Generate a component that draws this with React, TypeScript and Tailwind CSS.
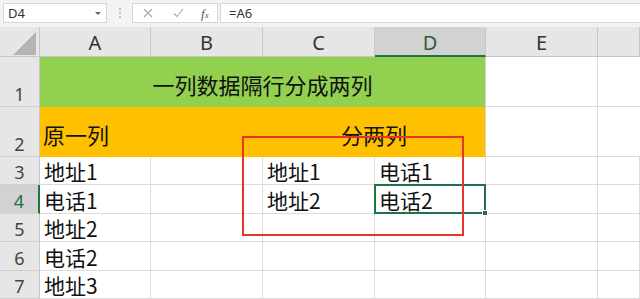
import React from "react";

const cjk = { fontFamily: '"Noto Sans CJK SC", "Noto Sans", sans-serif' };
const ui = { fontFamily: '"Noto Sans", "Open Sans", sans-serif' };

const cols = ["A", "B", "C", "D", "E", ""];

const dataRows = [
  { n: 3, cells: ["地址1", "", "地址1", "电话1", "", ""] },
  { n: 4, cells: ["电话1", "", "地址2", "电话2", "", ""] },
  { n: 5, cells: ["地址2", "", "", "", "", ""] },
  { n: 6, cells: ["电话2", "", "", "", "", ""] },
  { n: 7, cells: ["地址3", "", "", "", "", ""] },
];

function RowHead({ n, active }: { n: number; active?: boolean }) {
  return (
    <div
      className={
        "flex items-end justify-center pb-[3px] text-[18px] leading-none border-b border-[#d0d0d0] " +
        (active
          ? "bg-[#d2d2d2] text-[#217346] border-r-2 border-r-[#217346]"
          : "bg-[#e6e6e6] text-[#444] border-r border-r-[#c6c6c6]")
      }
      style={ui}
    >
      {n}
    </div>
  );
}

export default function App() {
  return (
    <div className="w-[640px] h-[299px] overflow-hidden bg-white relative">
      {/* formula bar */}
      <div className="h-[27px] bg-[#f3f3f3] flex items-start pt-[3px]" style={ui}>
        <div className="ml-[3px] w-[104px] h-[20px] bg-white border border-[#d6d6d6] flex items-center justify-between pl-[4px] pr-[5px]">
          <span className="text-[13px] text-[#333] leading-none">D4</span>
          <span className="w-0 h-0 border-l-[3px] border-r-[3px] border-t-[3px] border-l-transparent border-r-transparent border-t-[#666]" />
        </div>
        <div className="w-[25px] h-[20px] flex flex-col items-center justify-center gap-[2px]">
          <span className="w-[2px] h-[2px] bg-[#c0c0c0]" />
          <span className="w-[2px] h-[2px] bg-[#c0c0c0]" />
          <span className="w-[2px] h-[2px] bg-[#c0c0c0]" />
        </div>
        <div className="w-[86px] h-[20px] bg-white border border-[#d6d6d6] flex items-center pl-[10px]">
          <svg width="10" height="10" viewBox="0 0 10 10" className="mr-[20px]">
            <path d="M1 1L9 9M9 1L1 9" stroke="#a8a8a8" strokeWidth="1.1" fill="none" />
          </svg>
          <svg width="11" height="10" viewBox="0 0 11 10" className="mr-[17px]">
            <path d="M1 5.5L4 8.5L10 1" stroke="#a8a8a8" strokeWidth="1.1" fill="none" />
          </svg>
          <span className="italic text-[13px] text-[#555] leading-none" style={{ fontFamily: '"Liberation Serif", serif' }}>
            f<span className="text-[9px]">x</span>
          </span>
        </div>
        <div className="ml-[2px] flex-1 h-[20px] bg-white border border-[#d6d6d6] border-r-0 flex items-center pl-[8px]">
          <span className="text-[13px] text-[#333] leading-none">=A6</span>
        </div>
      </div>

      {/* sheet */}
      <div className="grid grid-cols-[40px_111px_112px_112px_111px_112px_1fr] grid-rows-[30px_50px_50px_28px_29px_28px_29px_28px]">
        {/* select-all corner */}
        <div className="bg-[#e6e6e6] border-r border-b border-[#c6c6c6] flex items-end justify-end pr-[3px] pb-[1px]">
          <svg width="23" height="23" viewBox="0 0 23 23">
            <path d="M23 0V23H0Z" fill="#b4b4b4" />
          </svg>
        </div>
        {cols.map((c, i) =>
          c === "D" ? (
            <div
              key={i}
              className="bg-[#d2d2d2] border-r border-r-[#c6c6c6] border-b-2 border-b-[#217346] flex items-end justify-center pb-[2px] text-[20px] leading-none text-[#2f5d3e]"
              style={ui}
            >
              {c}
            </div>
          ) : (
            <div
              key={i}
              className="bg-[#e6e6e6] border-r border-b border-[#c6c6c6] flex items-end justify-center pb-[3px] text-[20px] leading-none text-[#333]"
              style={ui}
            >
              {c}
            </div>
          )
        )}

        {/* row 1 */}
        <RowHead n={1} />
        <div
          className="col-span-4 bg-[#92d050] border-r border-b border-[#92d050] border-r-[#d4d4d4] flex items-center justify-center pt-[4px] text-[22px] leading-none text-[#111]"
          style={cjk}
        >
          一列数据隔行分成两列
        </div>
        <div className="border-r border-b border-[#dcdcdc]" />
        <div className="border-b border-[#dcdcdc]" />

        {/* row 2 */}
        <RowHead n={2} />
        <div
          className="col-span-2 bg-[#ffc000] border-b border-[#ffc000] flex items-center pl-[3px] pt-[5px] text-[22px] leading-none text-[#111]"
          style={cjk}
        >
          原一列
        </div>
        <div
          className="col-span-2 bg-[#ffc000] border-r border-b border-[#ffc000] border-r-[#d4d4d4] flex items-center justify-center pt-[5px] text-[22px] leading-none text-[#111]"
          style={cjk}
        >
          分两列
        </div>
        <div className="border-r border-b border-[#dcdcdc]" />
        <div className="border-b border-[#dcdcdc]" />

        {/* data rows */}
        {dataRows.map((r) => (
          <React.Fragment key={r.n}>
            <RowHead n={r.n} active={r.n === 4} />
            {r.cells.map((t, i) => (
              <div
                key={i}
                className={
                  "relative border-r border-b border-[#dcdcdc] flex items-center pl-[4px] pt-[2px] text-[21px] leading-none text-[#111] whitespace-nowrap" +
                  (r.n === 4 && i === 3 ? " z-10" : "")
                }
                style={cjk}
              >
                {t}
                {r.n === 4 && i === 3 && (
                  <div className="absolute -left-px -top-px -right-px -bottom-px border-2 border-[#217346]">
                    <div className="absolute -right-[4px] -bottom-[4px] w-[6px] h-[6px] bg-[#217346] border border-white" />
                  </div>
                )}
              </div>
            ))}
          </React.Fragment>
        ))}
      </div>

      {/* red annotation box */}
      <div className="absolute z-20 left-[242px] top-[136px] w-[222px] h-[100px] border-2 border-[#e5352a]" />
    </div>
  );
}
